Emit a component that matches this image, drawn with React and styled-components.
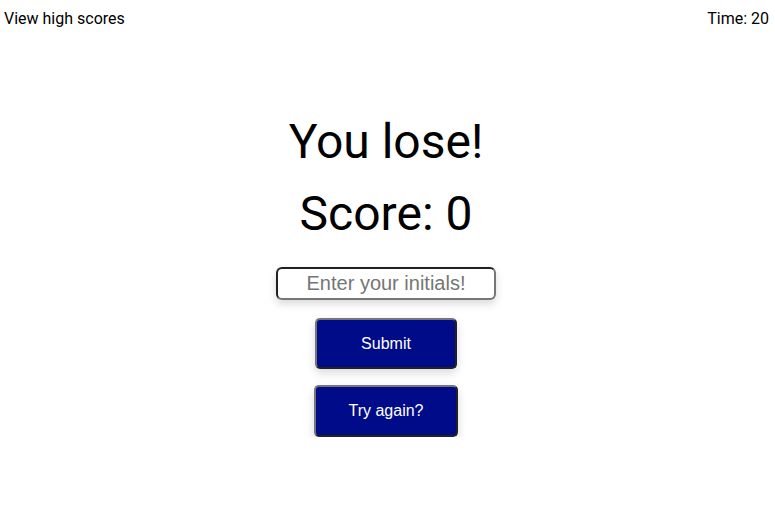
import styled, { createGlobalStyle } from "styled-components";

const Global = createGlobalStyle`
  body {
    margin: 0;
    background: #ffffff;
    font-family: Roboto, "Liberation Sans", sans-serif;
    color: #000000;
  }
`;

const TopBar = styled.header`
  display: flex;
  justify-content: space-between;
  align-items: center;
  padding: 9px 6px 9px 4px;
  font-size: 16px;
  line-height: 19px;
`;

const TopLink = styled.span`
  cursor: pointer;
`;

const Main = styled.main`
  display: flex;
  flex-direction: column;
  align-items: center;
  margin-top: 77px;
  padding-right: 3px;
`;

const Heading = styled.h1`
  margin: 0 0 ${(p) => p.$gap}px;
  font-size: 48px;
  font-weight: 400;
  line-height: 56px;
`;

const Initials = styled.input`
  box-sizing: border-box;
  width: 220px;
  height: 33px;
  margin-top: 9px;
  border: 2px inset #767676;
  border-radius: 6px;
  box-shadow: 0 4px 8px rgba(0, 0, 0, 0.15);
  font-family: "Liberation Sans", Arial, sans-serif;
  font-size: 20px;
  text-align: center;
  outline: none;

  &::placeholder {
    color: #757575;
  }
`;

const Button = styled.button`
  box-sizing: border-box;
  width: ${(p) => p.$width}px;
  height: ${(p) => p.$height}px;
  margin-top: ${(p) => p.$top}px;
  background: #000b8a;
  color: #ffffff;
  border: 2px outset #767676;
  border-radius: 5px;
  box-shadow: 0 4px 10px rgba(0, 0, 0, 0.15);
  font-family: "Liberation Sans", Arial, sans-serif;
  font-size: 16px;
  cursor: pointer;
`;

export default function App() {
  return (
    <>
      <Global />
      <TopBar>
        <TopLink>View high scores</TopLink>
        <span>Time: 20</span>
      </TopBar>
      <Main>
        <Heading $gap={16}>You lose!</Heading>
        <Heading $gap={16}>Score: 0</Heading>
        <Initials placeholder="Enter your initials!" />
        <Button $width={142} $height={51} $top={18}>
          Submit
        </Button>
        <Button $width={144} $height={52} $top={16}>
          Try again?
        </Button>
      </Main>
    </>
  );
}
